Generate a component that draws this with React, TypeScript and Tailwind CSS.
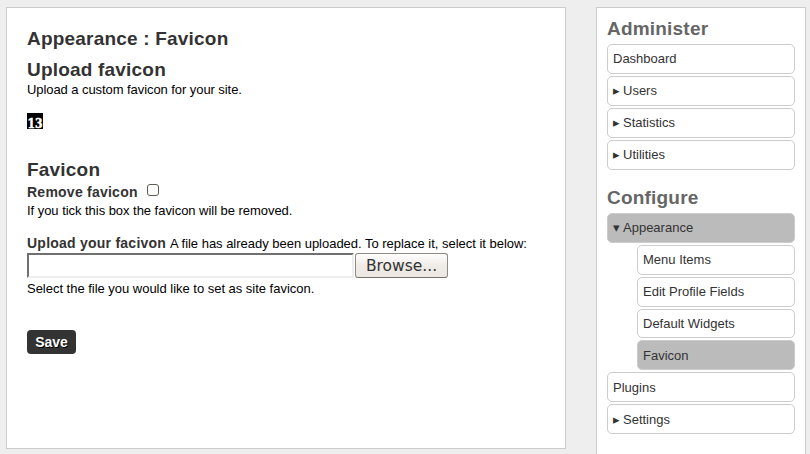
import React from "react";

type Item = { label: string; arrow?: string; active?: boolean; nested?: boolean; short?: boolean; low?: boolean };

const administer: Item[] = [
  { label: "Dashboard" },
  { label: "Users", arrow: "▸" },
  { label: "Statistics", arrow: "▸" },
  { label: "Utilities", arrow: "▸" },
];

const configure: Item[] = [
  { label: "Appearance", arrow: "▾", active: true },
  { label: "Menu Items", nested: true },
  { label: "Edit Profile Fields", nested: true },
  { label: "Default Widgets", nested: true, short: true },
  { label: "Favicon", nested: true, active: true, low: true },
  { label: "Plugins", low: true },
  { label: "Settings", arrow: "▸", low: true },
];

function Menu({ items }: { items: Item[] }) {
  return (
    <ul className="flex flex-col gap-0.5">
      {items.map((i) => (
        <li
          key={i.label}
          className={`flex items-center rounded-[5px] border border-[#cccccc] pl-[5px] text-[13px] text-[#333333] ${
            i.short ? "h-[29px]" : "h-[30px]"
          } ${i.nested ? "ml-[30px]" : ""} ${i.low ? "pt-0.5" : ""} ${i.active ? "bg-[#bbbbbb]" : "bg-white"}`}
        >
          {i.arrow && <span className="w-2.5 font-['DejaVu_Sans',sans-serif] text-[13px]">{i.arrow}</span>}
          <span>{i.label}</span>
        </li>
      ))}
    </ul>
  );
}

export default function App() {
  return (
    <div className="flex h-[454px] w-[810px] items-start overflow-hidden bg-[#eeeeee] pt-[7px] pl-[6px] font-['Liberation_Sans',Arial,sans-serif] text-[13px] leading-[16px] text-black">
      <main className="h-[442px] w-[560px] shrink-0 border border-[#cccccc] bg-white pt-[18px] pl-5 whitespace-nowrap">
        <h1 className="h-[31px] text-[19px] leading-[26px] font-bold tracking-[0.2px] text-[#333333]">Appearance : Favicon</h1>
        <h2 className="h-6 text-[19px] leading-[26px] font-bold tracking-[0.2px] text-[#333333]">Upload favicon</h2>
        <p className="h-[32px] pt-px tracking-[-0.07px]">Upload a custom favicon for your site.</p>
        <div className="flex h-4 w-4 items-end justify-center bg-black">
          <svg viewBox="0 0 16 16" className="h-4 w-4 overflow-visible">
            <text
              x="0.5"
              y="15"
              textLength="15"
              lengthAdjust="spacingAndGlyphs"
              className="fill-white stroke-white stroke-[0.5px] font-['DejaVu_Serif',serif] text-[13px] font-bold"
            >
              13
            </text>
          </svg>
        </div>
        <h2 className="mt-[28px] h-6 text-[19px] leading-[26px] font-bold tracking-[0.2px] text-[#333333]">Favicon</h2>
        <label className="flex h-[21px] items-center text-[14px] font-bold tracking-[0.24px] text-[#333333]">
          Remove favicon
          <input
            type="checkbox"
            className="mb-1 ml-[9px] h-3 w-3 appearance-none rounded-[3px] border border-[#5c5c55] bg-white"
          />
        </label>
        <p className="h-[32px] pt-px tracking-[-0.04px]">If you tick this box the favicon will be removed.</p>
        <p className="h-[17px] pt-px tracking-[-0.02px]">
          <label className="mr-px text-[14px] font-bold tracking-[0.24px] text-[#333333]">Upload your facivon</label> A
          file has already been uploaded. To replace it, select it below:
        </p>
        <div className="mt-[2px] flex h-[26px]">
          <div className="h-[25px] w-[327px] border-2 border-t-[#707070] border-r-[#eeeeee] border-b-[#eeeeee] border-l-[#707070] bg-white" />
          <button className="ml-px h-[25px] w-[93px] rounded-[3px] border border-[#8f8a84] border-b-[#77726c] bg-linear-to-b from-white via-[#efebe7] to-[#ebe7e2] font-['DejaVu_Sans',sans-serif] text-[15.5px] leading-[22px] text-[#333333]">
            Browse...
          </button>
        </div>
        <p className="mt-[2px] tracking-[-0.02px]">Select the file you would like to set as site favicon.</p>
        <button className="mt-[33px] h-6 w-[49px] rounded-[4px] bg-[#333333] text-[14px] font-bold text-white [text-shadow:1px_1px_0_#000000]">
          Save
        </button>
      </main>
      <aside className="ml-[30px] h-[460px] w-[210px] shrink-0 border border-[#cccccc] bg-white px-2.5 pt-[8px]">
        <h3 className="mb-1 h-6 text-[19px] leading-[26px] font-bold tracking-[0.2px] text-[#666666]">Administer</h3>
        <Menu items={administer} />
        <h3 className="mt-[15px] mb-1 h-6 text-[19px] leading-[26px] font-bold tracking-[0.2px] text-[#666666]">Configure</h3>
        <Menu items={configure} />
      </aside>
    </div>
  );
}
